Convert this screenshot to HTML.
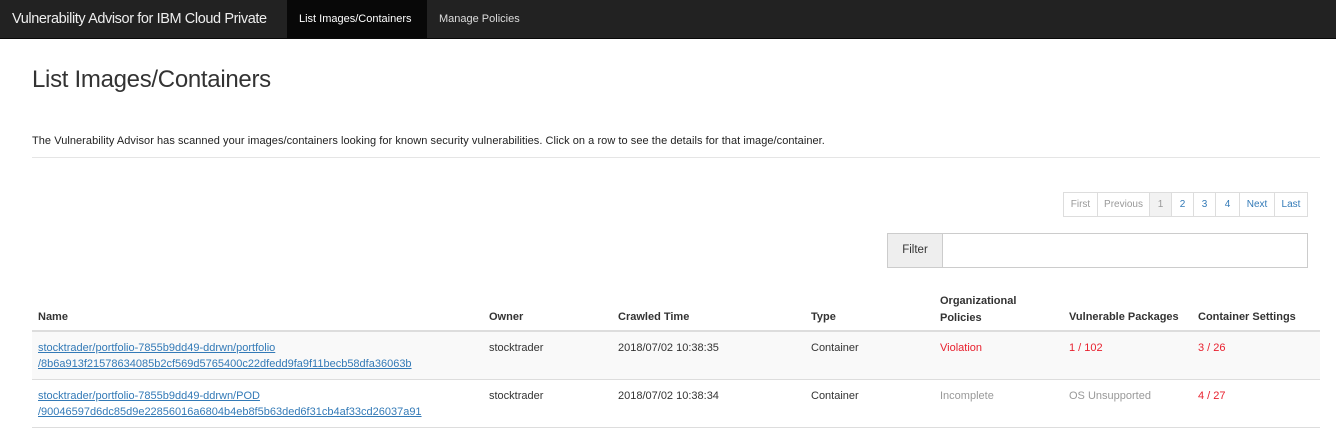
<!DOCTYPE html>
<html><head><style>
*{box-sizing:border-box;margin:0;padding:0}
body{width:1336px;height:430px;overflow:hidden;background:#fff;font-family:"Liberation Sans",sans-serif;color:#333;position:relative}
.nav{position:absolute;left:0;top:0;width:1336px;height:39px;background:#222;border-bottom:1px solid #080808}
.brand{position:absolute;left:12px;top:11px;color:#eee;font-size:14.5px;letter-spacing:-0.4px;white-space:nowrap}
.tab{position:absolute;top:0;height:39px;line-height:38px;font-size:11px;color:#ddd;padding:0 12px;white-space:nowrap}
.a{position:absolute}
h1{position:absolute;left:32px;top:66px;font-weight:300;font-size:24px;color:#333;letter-spacing:-0.3px}
.desc{position:absolute;left:32px;top:135px;font-size:11px;color:#222;white-space:nowrap;letter-spacing:0.05px}
.hr{position:absolute;left:32px;top:157px;width:1288px;border-top:1px solid #e5e5e5}
.pg{position:absolute;top:192px;height:25px;border:1px solid #ddd;font-size:10px;line-height:23px;text-align:center;color:#337ab7}
.th{position:absolute;font-size:11px;font-weight:bold;color:#333;white-space:nowrap}
.td{position:absolute;font-size:11px;color:#333;line-height:16px;white-space:nowrap}
.lnk{color:#337ab7;text-decoration:underline}
.red{color:#e8202e}.gr{color:#999}
</style></head><body>
<div class="nav">
<div class="brand">Vulnerability Advisor for IBM Cloud Private</div>
<div class="tab" style="left:287px;width:140px;background:#080808;color:#fff">List Images/Containers</div>
<div class="tab" style="left:427px">Manage Policies</div>
</div>
<h1>List Images/Containers</h1>
<div class="desc">The Vulnerability Advisor has scanned your images/containers looking for known security vulnerabilities. Click on a row to see the details for that image/container.</div>
<div class="hr"></div>
<div class="pg" style="left:1063px;width:35px;color:#999">First</div>
<div class="pg" style="left:1097px;width:53px;color:#999">Previous</div>
<div class="pg" style="left:1149px;width:23px;color:#999;background:#f2f2f2">1</div>
<div class="pg" style="left:1171px;width:23px">2</div>
<div class="pg" style="left:1193px;width:23px">3</div>
<div class="pg" style="left:1215px;width:25px">4</div>
<div class="pg" style="left:1239px;width:36px">Next</div>
<div class="pg" style="left:1274px;width:34px">Last</div>
<div class="a" style="left:887px;top:233px;width:56px;height:35px;border:1px solid #ccc;background:#eee;font-size:11.5px;line-height:33px;text-align:center">Filter</div>
<div class="a" style="left:942px;top:233px;width:366px;height:35px;border:1px solid #ccc"></div>
<div class="th" style="left:38px;top:311px">Name</div>
<div class="th" style="left:489px;top:311px">Owner</div>
<div class="th" style="left:618px;top:311px">Crawled Time</div>
<div class="th" style="left:811px;top:311px">Type</div>
<div class="th" style="left:940px;top:293px;line-height:17px">Organizational<br>Policies</div>
<div class="th" style="left:1069px;top:311px">Vulnerable Packages</div>
<div class="th" style="left:1198px;top:311px">Container Settings</div>
<div class="a" style="left:32px;top:330px;width:1288px;height:2px;background:#ddd"></div>
<div class="a" style="left:32px;top:332px;width:1288px;height:47px;background:#f9f9f9"></div>
<div class="a" style="left:32px;top:379px;width:1288px;height:1px;background:#ddd"></div>
<div class="a" style="left:32px;top:427px;width:1288px;height:1px;background:#ddd"></div>
<div class="td" style="left:38px;top:340px"><span class="lnk">stocktrader/portfolio-7855b9dd49-ddrwn/portfolio<br>/8b6a913f21578634085b2cf569d5765400c22dfedd9fa9f11becb58dfa36063b</span></div>
<div class="td" style="left:489px;top:340px">stocktrader</div>
<div class="td" style="left:618px;top:340px">2018/07/02 10:38:35</div>
<div class="td" style="left:811px;top:340px">Container</div>
<div class="td red" style="left:940px;top:340px">Violation</div>
<div class="td red" style="left:1069px;top:340px">1 / 102</div>
<div class="td red" style="left:1198px;top:340px">3 / 26</div>
<div class="td" style="left:38px;top:388px"><span class="lnk">stocktrader/portfolio-7855b9dd49-ddrwn/POD<br>/90046597d6dc85d9e22856016a6804b4eb8f5b63ded6f31cb4af33cd26037a91</span></div>
<div class="td" style="left:489px;top:388px">stocktrader</div>
<div class="td" style="left:618px;top:388px">2018/07/02 10:38:34</div>
<div class="td" style="left:811px;top:388px">Container</div>
<div class="td gr" style="left:940px;top:388px">Incomplete</div>
<div class="td gr" style="left:1069px;top:388px">OS Unsupported</div>
<div class="td red" style="left:1198px;top:388px">4 / 27</div>
</body></html>
